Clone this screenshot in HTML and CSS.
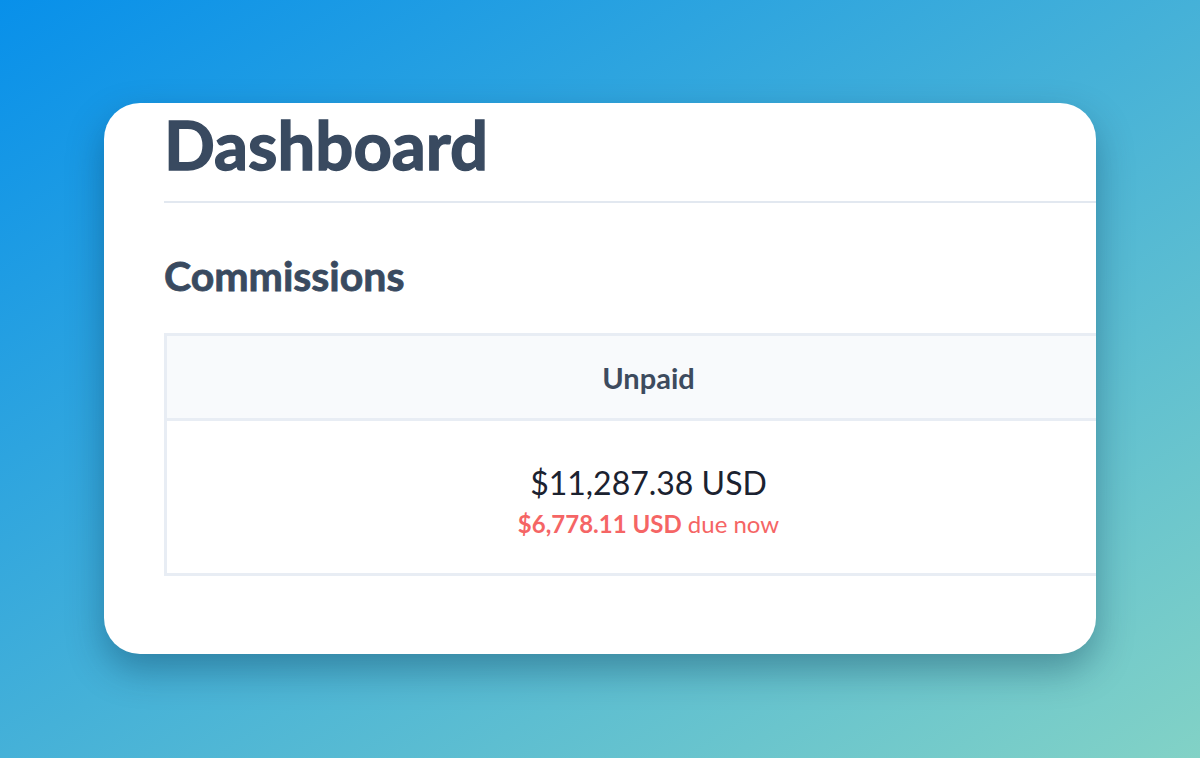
FILE: index.html
```html
<!DOCTYPE html>
<html lang="en">
<head>
  <meta charset="UTF-8">
  <title>Dashboard</title>
  <link rel="stylesheet" href="styles.css">
</head>
<body>

<div class="tarjeta">
  <div class="contenido">
    <h1 class="titulo">Dashboard</h1>

    <h2 class="subtitulo">Commissions</h2>

    <table class="tabla-comisiones">
      <thead>
        <tr>
          <th>Unpaid</th>
        </tr>
      </thead>
      <tbody>
        <tr>
          <td>
            <div class="monto">$11,287.38 USD</div>
            <div class="pendiente"><strong>$6,778.11 USD</strong> due now</div>
          </td>
        </tr>
      </tbody>
    </table>
  </div>
</div>

</body>
</html>
```

FILE: styles.css
```css
html, body {
  height: 100%;
}

body {
  font-family: Lato, "Open Sans", sans-serif;
  margin: 0;
  padding: 103px 104px 104px;
  box-sizing: border-box;
  background: linear-gradient(to bottom right, #0890ea, #82d2c6);
}

.tarjeta {
  height: 551px;
  background-color: #ffffff;
  border-radius: 36px;
  box-shadow: 0 16px 36px rgba(0, 40, 70, 0.35);
  overflow: hidden;
}

.contenido {
  width: 969px;
  margin-left: 60px;
}

.titulo {
  margin: 0;
  padding-bottom: 16px;
  border-bottom: 2px solid #e2e8f0;
  font-size: 67px;
  line-height: 82px;
  font-weight: 700;
  color: #394a60;
  -webkit-text-stroke: 1.4px #394a60;
}

.subtitulo {
  margin: 48px 0 33px;
  font-size: 41px;
  line-height: 1.2;
  font-weight: 700;
  color: #394a60;
  -webkit-text-stroke: 0.8px #394a60;
}

.tabla-comisiones {
  width: 100%;
  border-collapse: collapse;
  border: 3px solid #e8edf4;
}

.tabla-comisiones th {
  height: 82px;
  padding: 0;
  background-color: #f8fafc;
  border-bottom: 3px solid #e8edf4;
  font-size: 29px;
  font-weight: 700;
  color: #3d4b5e;
}

.tabla-comisiones td {
  padding: 44px 0 26px;
  text-align: center;
}

.monto {
  font-size: 32px;
  line-height: 36px;
  color: #1b2230;
}

.pendiente {
  font-size: 24px;
  line-height: 46px;
  color: #f56565;
}

.pendiente strong {
  font-weight: 700;
}
```
